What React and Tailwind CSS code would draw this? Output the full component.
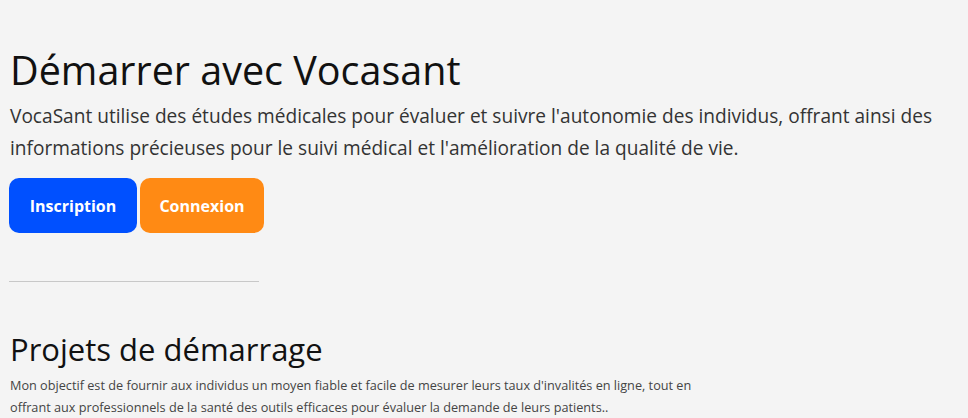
import React from 'react';

const App = () => {
  return (
    <div className="min-h-screen bg-[#f4f4f4] text-black" style={{ fontFamily: '"Open Sans", "Liberation Sans", sans-serif' }}>
      {/* Intro */}
      <div className="px-[10px] pt-[46px]">
        <h1 className="text-[39.5px] leading-[48px] font-normal text-[#111]">Démarrer avec Vocasant</h1>
        <p className="mt-[6px] whitespace-nowrap text-[19.1px] leading-[32px] text-[#333]">
          VocaSant utilise des études médicales pour évaluer et suivre l'autonomie des individus, offrant ainsi des
          <br />
          informations précieuses pour le suivi médical et l'amélioration de la qualité de vie.
        </p>
        <div className="mt-[14px] flex gap-[3px]">
          <button className="-ml-px h-[55px] w-[128px] rounded-[10px] bg-[#0050ff] text-[16px] font-bold text-white">
            Inscription
          </button>
          <button className="h-[55px] w-[124px] rounded-[10px] bg-[#ff8a14] text-[16px] font-bold text-white">
            Connexion
          </button>
        </div>
      </div>

      <hr className="mx-[9px] mt-[48px] w-[250px] border-t border-[#c8c8c8]" />

      {/* Projets */}
      <div className="px-[10px] pt-[48px]">
        <h2 className="text-[31px] leading-[38px] text-[#111]">Projets de démarrage</h2>
        <p className="mt-[6px] text-[12.7px] leading-[22px] text-[#444]">
          Mon objectif est de fournir aux individus un moyen fiable et facile de mesurer leurs taux d'invalités en ligne, tout en
          <br />
          offrant aux professionnels de la santé des outils efficaces pour évaluer la demande de leurs patients..
        </p>
      </div>
    </div>
  );
};

export default App;
